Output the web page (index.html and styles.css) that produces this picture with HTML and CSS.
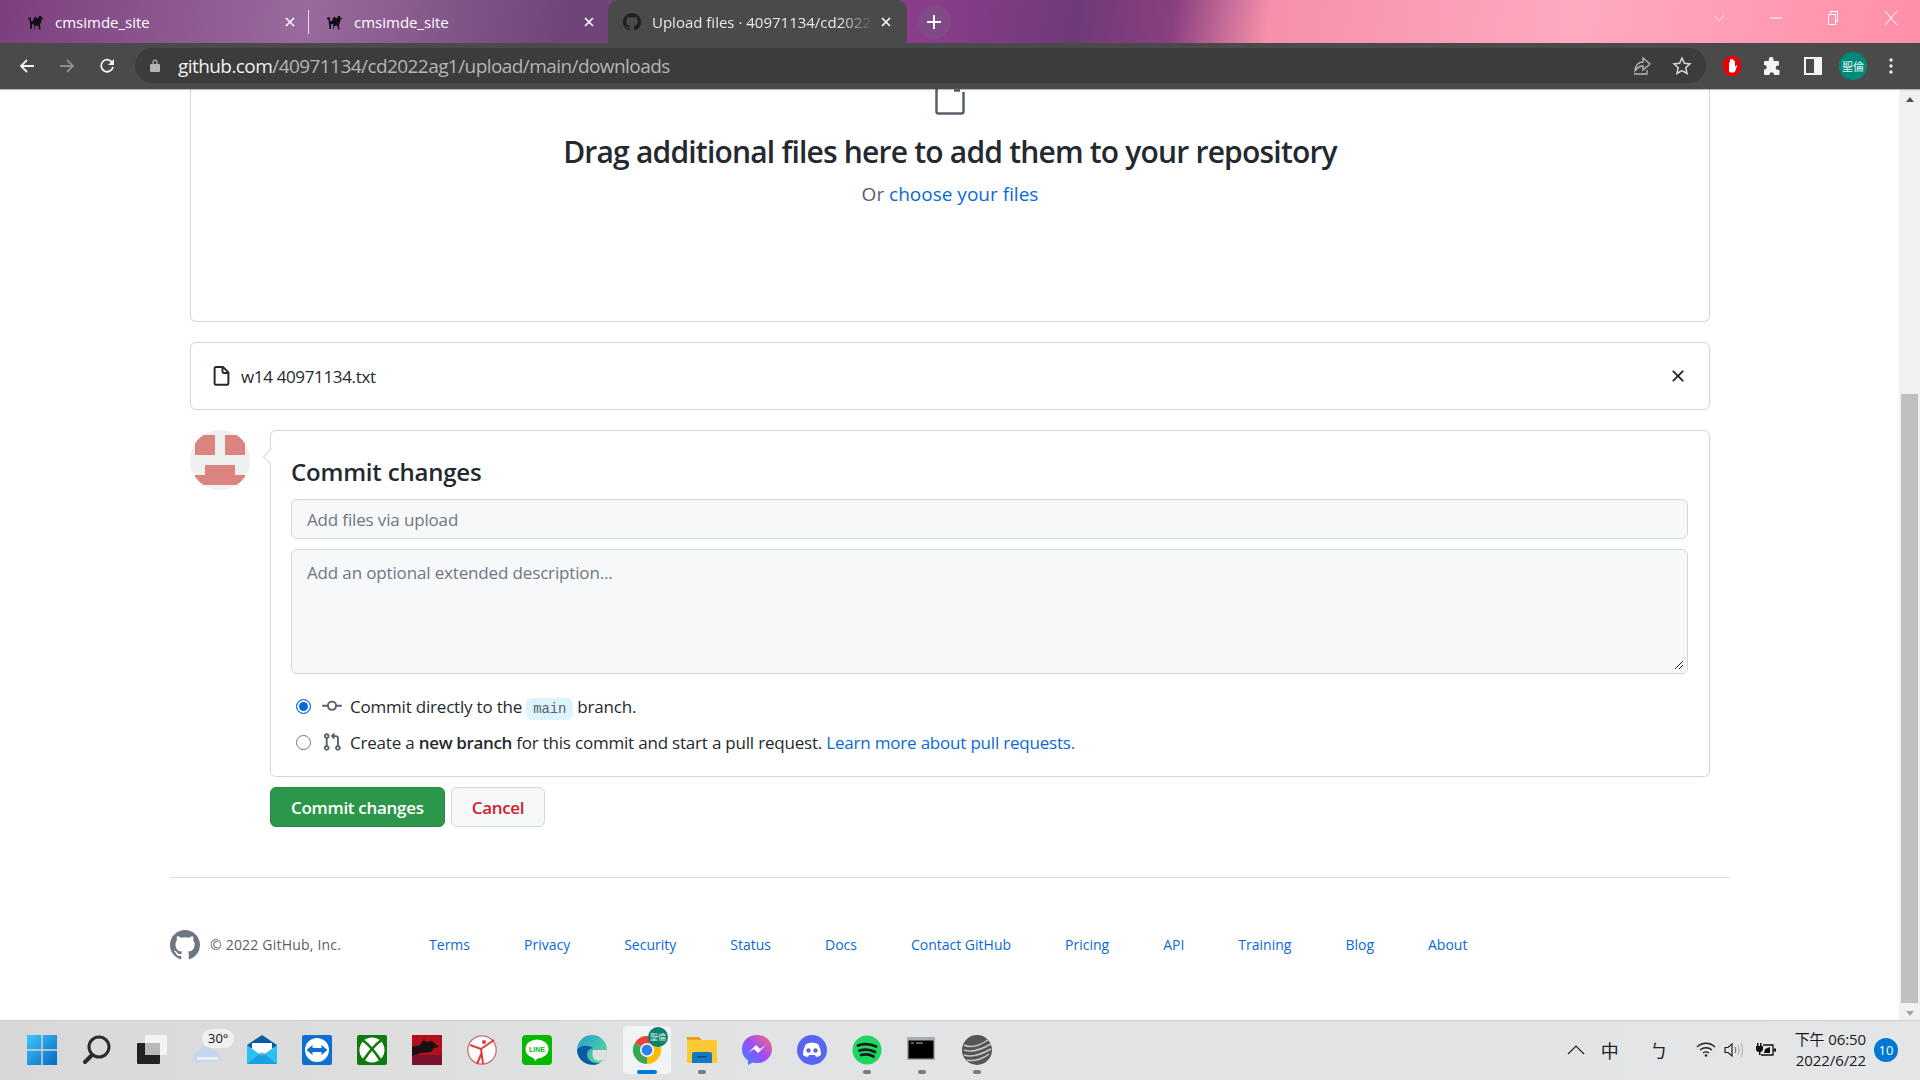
FILE: index.html
```html
<!DOCTYPE html>
<html lang="en">
  <head>
    <meta charset="UTF-8" />
    <title>Upload files · 40971134/cd2022ag1</title>
    <link rel="stylesheet" href="styles.css">
  </head>
  <body>
    <div class="window">
      <div class="tab-strip">
        <div class="tab">
          <svg class="tab-icon" viewBox="0 0 18 18"><path fill="#140c18" d="M1 5l2-1 1 1v3l2 0 1-3 1.500-1.500L10 5l1 .5 1-2.500 2 0 .5 1.500 2 1-2 1-.5 3-1 2 .5 5h-1.500l-.8-4-3 .5-.2 3.500H7.500L7 11 5 11.500 5 16H3.500L3 10.500 2.500 7 1.500 6.500z"/></svg>
          <span class="tab-title">cmsimde_site</span>
          <svg class="tab-close" viewBox="0 0 10 10"><path stroke="#fff" stroke-width="1.600" d="M1 1l8 8M9 1L1 9"/></svg>
        </div>
        <div class="tab-sep"></div>
        <div class="tab tab-second">
          <svg class="tab-icon" viewBox="0 0 18 18"><path fill="#140c18" d="M1 5l2-1 1 1v3l2 0 1-3 1.500-1.500L10 5l1 .5 1-2.500 2 0 .5 1.500 2 1-2 1-.5 3-1 2 .5 5h-1.500l-.8-4-3 .5-.2 3.500H7.500L7 11 5 11.500 5 16H3.500L3 10.500 2.500 7 1.500 6.500z"/></svg>
          <span class="tab-title">cmsimde_site</span>
          <svg class="tab-close" viewBox="0 0 10 10"><path stroke="#fff" stroke-width="1.600" d="M1 1l8 8M9 1L1 9"/></svg>
        </div>
        <div class="tab tab-active">
          <svg class="tab-icon" viewBox="0 0 16 16"><path fill="#1f1f1f" d="M8 0C3.580 0 0 3.580 0 8c0 3.540 2.290 6.530 5.470 7.590.4.070.55-.17.55-.38 0-.19-.01-.82-.01-1.490-2.010.37-2.530-.49-2.690-.94-.09-.23-.48-.94-.82-1.130-.28-.15-.68-.52-.01-.53.63-.01 1.080.58 1.230.82.72 1.210 1.870.87 2.330.66.07-.52.28-.87.51-1.070-1.780-.2-3.640-.89-3.640-3.950 0-.87.31-1.590.82-2.150-.08-.2-.36-1.020.08-2.120 0 0 .67-.21 2.200.82.64-.18 1.320-.27 2-.27.68 0 1.360.09 2 .27 1.530-1.040 2.200-.82 2.200-.82.44 1.100.16 1.920.08 2.120.51.56.82 1.270.82 2.150 0 3.070-1.870 3.750-3.650 3.950.29.25.54.73.54 1.480 0 1.070-.01 1.930-.01 2.200 0 .21.15.46.55.38A8.013 8.013 0 0016 8c0-4.420-3.580-8-8-8z"/></svg>
          <span class="tab-title tab-title-fade">Upload files · 40971134/cd2022ag1</span>
          <svg class="tab-close" viewBox="0 0 10 10"><path stroke="#fff" stroke-width="1.600" d="M1 1l8 8M9 1L1 9"/></svg>
        </div>
        <div class="new-tab">
          <svg width="14" height="14" viewBox="0 0 14 14"><path stroke="#fff" stroke-width="2" d="M7 0v14M0 7h14"/></svg>
        </div>
        <div class="window-buttons">
          <svg width="12" height="12" viewBox="0 0 12 12"><path fill="none" stroke="#ffe6ee" d="M1 3l5 6 5-6"/></svg>
          <svg width="12" height="12" viewBox="0 0 12 12"><path stroke="#fff" d="M0 6h12"/></svg>
          <svg width="12" height="14" viewBox="0 0 12 14"><path fill="none" stroke="#fff" d="M1.500 3.500h7v10h-7zM3.500 3.500v-3h7v10H8.500"/></svg>
          <svg width="14" height="14" viewBox="0 0 14 14"><path stroke="#fff" d="M1 0l12 14M13 0L1 14"/></svg>
        </div>
      </div>

      <div class="toolbar">
        <svg class="nav-icon" viewBox="0 0 16 16"><path fill="none" stroke="#f1f1f1" stroke-width="1.800" d="M15 8H2M8 2L2 8l6 6"/></svg>
        <svg class="nav-icon" viewBox="0 0 16 16"><path fill="none" stroke="#8f8f8f" stroke-width="1.800" d="M1 8h13M8 2l6 6-6 6"/></svg>
        <svg class="nav-icon" viewBox="0 0 16 16"><path fill="none" stroke="#f1f1f1" stroke-width="1.800" d="M13.500 5A6 6 0 1 0 14 9"/><path fill="#f1f1f1" d="M15 1v6H9z"/></svg>
        <div class="omnibox">
          <svg class="lock" viewBox="0 0 10 13"><path fill="#b5b5b5" d="M1 5h8a1 1 0 0 1 1 1v6a1 1 0 0 1-1 1H1a1 1 0 0 1-1-1V6a1 1 0 0 1 1-1zM2.500 5V3a2.500 2.500 0 0 1 5 0v2H6.300V3a1.300 1.300 0 0 0-2.600 0v2z"/></svg>
          <span class="url-host">github.com</span><span class="url-path">/40971134/cd2022ag1/upload/main/downloads</span>
          <div class="omnibox-actions">
            <svg width="20" height="20" viewBox="0 0 20 20"><path fill="none" stroke="#b8b8b8" stroke-width="1.300" d="M2 18h13v-4M3 15c0-6 4-9 8-9V2l7 6-7 6v-4c-4 0-6 2-8 5z"/></svg>
            <svg width="20" height="20" viewBox="0 0 20 20"><path fill="none" stroke="#d8d8d8" stroke-width="1.500" d="M10 2l2.400 5.300 5.600.6-4.200 3.800 1.200 5.700-5-2.900-5 2.900 1.200-5.700L2 7.900l5.600-.6z"/></svg>
          </div>
        </div>
        <div class="toolbar-exts">
          <svg width="20" height="22" viewBox="0 0 20 22"><path fill="#e0060b" d="M6 1h8l5 5v10l-5 5H6l-5-5V6z"/><path fill="#fff" d="M7 7.500a1 1 0 0 1 1 0V5a1 1 0 0 1 2 0v-.5a1 1 0 0 1 1.500 0V6a1 1 0 0 1 1.500.5V12l1-1.500c.5-.5 1.500 0 1 .8L13 16.500a2 2 0 0 1-1.700 1H9a2 2 0 0 1-2-2z"/></svg>
          <svg width="18" height="18" viewBox="0 0 18 18"><path fill="#f4f4f4" d="M7 0a2.300 2.300 0 0 1 2.500 2.500V4H14a1 1 0 0 1 1 1v3.500h-1a2.200 2.200 0 0 0 0 4.500h1.500v4a1 1 0 0 1-1 1H10v-1a2.300 2.300 0 0 0-4.500 0v1H1a1 1 0 0 1-1-1v-4.500h1a2.300 2.300 0 0 0 0-4.500H0V5a1 1 0 0 1 1-1h3.800V2.500A2.300 2.300 0 0 1 7 0z"/></svg>
          <svg width="18" height="18" viewBox="0 0 18 18"><path fill="#f4f4f4" fill-rule="evenodd" d="M0 0h18v18H0zM2 2v14h8V2z"/></svg>
          <div class="profile-badge">聖倫</div>
          <svg width="4" height="16" viewBox="0 0 4 16"><circle cx="2" cy="2" r="1.700" fill="#e8e8e8"/><circle cx="2" cy="8" r="1.700" fill="#e8e8e8"/><circle cx="2" cy="14" r="1.700" fill="#e8e8e8"/></svg>
        </div>
      </div>

      <div class="viewport">
        <div class="page">
          <div class="content">
            <div class="drop-box">
              <svg class="drop-icon" viewBox="0 0 30 26"><path fill="none" stroke="#57606a" stroke-width="2.500" d="M1.500 0v22.500a2 2 0 0 0 2 2h23a2 2 0 0 0 2-2V3M19 1.500h6"/></svg>
              <div class="drop-title">Drag additional files here to add them to your repository</div>
              <div class="drop-sub">Or <a class="link">choose your files</a></div>
            </div>

            <div class="file-box">
              <svg class="file-icon" viewBox="0 0 16 16"><path fill="#24292f" fill-rule="evenodd" d="M3.750 1.500a.25.25 0 00-.25.25v11.500c0 .138.112.25.25.25h8.500a.25.25 0 00.25-.25V6H9.750A1.750 1.750 0 018 4.250V1.500H3.750zm5.750.56v2.190c0 .138.112.25.25.25h2.190L9.500 2.060zM2 1.750C2 .784 2.784 0 3.750 0h5.086c.464 0 .909.184 1.237.513l3.414 3.414c.329.328.513.773.513 1.237v8.086A1.750 1.750 0 0112.250 15h-8.500A1.750 1.750 0 012 13.250V1.750z"/></svg>
              <span class="file-name">w14 40971134.txt</span>
              <svg class="file-remove" viewBox="0 0 16 16"><path fill="#24292f" d="M3.720 3.720a.75.75 0 011.060 0L8 6.940l3.220-3.220a.75.75 0 111.060 1.060L9.060 8l3.220 3.220a.75.75 0 11-1.060 1.060L8 9.060l-3.220 3.220a.75.75 0 01-1.060-1.060L6.940 8 3.720 4.780a.75.75 0 010-1.060z"/></svg>
            </div>

            <div class="commit-row">
              <svg class="avatar" viewBox="0 0 60 60">
                <defs><clipPath id="avatarClip"><circle cx="30" cy="30" r="30"/></clipPath></defs>
                <circle cx="30" cy="30" r="30" fill="#f0f0f0"/>
                <path clip-path="url(#avatarClip)" fill="#dc8480" d="M5 5h20v20H5zM35 5h20v20H35zM15 35h30v10h10v10H5V45h10z"/>
              </svg>
              <div class="commit-col">
                <div class="commit-box">
                  <h3 class="commit-title">Commit changes</h3>
                  <div class="field field-title">Add files via upload</div>
                  <div class="field field-desc">
                    Add an optional extended description...
                    <svg class="resize-grip" viewBox="0 0 10 10"><path stroke="#24292f" d="M1 9l8-8M5 9l4-4"/></svg>
                  </div>
                  <div class="radio-row first-radio">
                    <span class="radio radio-on"></span>
                    <svg class="radio-icon" viewBox="0 0 16 16"><path fill="#57606a" d="M10.500 7.750a2.500 2.500 0 11-5 0 2.500 2.500 0 015 0zm1.430.75a4.002 4.002 0 01-7.860 0H.75a.75.75 0 110-1.500h3.320a4.001 4.001 0 017.860 0h3.320a.75.75 0 110 1.500h-3.320z" fill-rule="evenodd"/></svg>
                    <span>Commit directly to the <code class="branch">main</code> branch.</span>
                  </div>
                  <div class="radio-row">
                    <span class="radio"></span>
                    <svg class="radio-icon" viewBox="0 0 16 16"><path fill="#57606a" fill-rule="evenodd" d="M7.177 3.073L9.573.677A.25.25 0 0110 .854v4.792a.25.25 0 01-.427.177L7.177 3.427a.25.25 0 010-.354zM3.750 2.500a.75.75 0 100 1.500.75.75 0 000-1.500zm-2.250.75a2.250 2.250 0 113 2.122v5.256a2.251 2.251 0 11-1.500 0V5.372A2.250 2.250 0 011.500 3.250zM11 2.500h-1V4h1a1 1 0 011 1v5.628a2.251 2.251 0 101.500 0V5A2.500 2.500 0 0011 2.500zm1 10.250a.75.75 0 111.500 0 .75.75 0 01-1.500 0zM3.750 12a.75.75 0 100 1.500.75.75 0 000-1.500z"/></svg>
                    <span>Create a <strong class="strong-branch">new branch</strong> for this commit and start a pull request. <a class="link">Learn more about pull requests.</a></span>
                  </div>
                </div>
                <div class="commit-buttons">
                  <button class="btn btn-primary" type="button">Commit changes</button>
                  <button class="btn btn-danger" type="button">Cancel</button>
                </div>
              </div>
            </div>
          </div>

          <div class="footer">
            <svg class="footer-logo" viewBox="0 0 16 16"><path fill="#6e7781" d="M8 0C3.580 0 0 3.580 0 8c0 3.540 2.290 6.530 5.470 7.590.4.070.55-.17.55-.38 0-.19-.01-.82-.01-1.490-2.010.37-2.530-.49-2.690-.94-.09-.23-.48-.94-.82-1.130-.28-.15-.68-.52-.01-.53.63-.01 1.080.58 1.230.82.72 1.210 1.870.87 2.330.66.07-.52.28-.87.51-1.070-1.780-.2-3.640-.89-3.640-3.950 0-.87.31-1.590.82-2.150-.08-.2-.36-1.020.08-2.120 0 0 .67-.21 2.200.82.64-.18 1.320-.27 2-.27.68 0 1.360.09 2 .27 1.530-1.040 2.200-.82 2.200-.82.44 1.100.16 1.920.08 2.120.51.56.82 1.270.82 2.150 0 3.070-1.870 3.750-3.650 3.950.29.25.54.73.54 1.480 0 1.070-.01 1.930-.01 2.200 0 .21.15.46.55.38A8.013 8.013 0 0016 8c0-4.420-3.580-8-8-8z"/></svg>
            <span class="copyright">© 2022 GitHub, Inc.</span>
            <nav class="footer-links">
              <a class="link">Terms</a>
              <a class="link">Privacy</a>
              <a class="link">Security</a>
              <a class="link">Status</a>
              <a class="link">Docs</a>
              <a class="link">Contact GitHub</a>
              <a class="link">Pricing</a>
              <a class="link">API</a>
              <a class="link">Training</a>
              <a class="link">Blog</a>
              <a class="link">About</a>
            </nav>
          </div>
        </div>

        <div class="scrollbar">
          <div class="scroll-arrow scroll-up"></div>
          <div class="scroll-track"><div class="scroll-thumb"></div></div>
          <div class="scroll-arrow scroll-down"></div>
        </div>
      </div>

      <div class="taskbar">
        <div class="task-icons">
          <div class="task-cell">
            <svg viewBox="0 0 30 30"><defs><linearGradient id="win" x1="0" y1="0" x2="1" y2="1"><stop offset="0" stop-color="#3ec6f8"/><stop offset="1" stop-color="#0668c6"/></linearGradient></defs><path fill="url(#win)" d="M0 0h14.300v14.300H0zM15.700 0H30v14.300H15.700zM0 15.700h14.300V30H0zM15.700 15.700H30V30H15.700z"/></svg>
          </div>
          <div class="task-cell">
            <svg viewBox="0 0 30 30"><circle cx="17" cy="12" r="10" fill="none" stroke="#2b2b2b" stroke-width="3"/><path stroke="#2b2b2b" stroke-width="4" stroke-linecap="round" d="M10 20l-7 7"/></svg>
          </div>
          <div class="task-cell">
            <svg viewBox="0 0 30 30"><rect x="8" width="22" height="20" rx="1" fill="#f3f3f3"/><rect y="8" width="23" height="21" rx="1" fill="#222"/><rect x="8" y="8" width="15" height="12" fill="#b9b9b9"/></svg>
          </div>
          <div class="task-cell weather-cell">
            <svg viewBox="0 0 30 30"><path fill="#c5d7ee" d="M6 27a5 5 0 0 1 0-10 8 8 0 0 1 15-1 6 6 0 0 1 4 11z"/><path fill="#e9eff8" d="M5 22h21v3H5z"/></svg>
            <span class="weather-temp">30°</span>
          </div>
          <div class="task-cell">
            <svg viewBox="0 0 30 30"><path fill="#0a5aa8" d="M15 0l15 10v3H0v-3z"/><path fill="#fff" d="M5 8h20v10H5z"/><path fill="#2cc0ee" d="M0 10l15 11 15-11v19H0z"/><path fill="#0f84d8" d="M0 29l15-12 15 12z" opacity=".55"/></svg>
          </div>
          <div class="task-cell">
            <svg viewBox="0 0 30 30"><rect width="30" height="30" rx="2" fill="#0e6fd2"/><circle cx="15" cy="15" r="12" fill="#fff"/><path fill="#0e6fd2" d="M4.500 15l6-5v3h9v-3l6 5-6 5v-3h-9v3z"/></svg>
          </div>
          <div class="task-cell">
            <svg viewBox="0 0 30 30"><rect width="30" height="30" rx="2" fill="#0f7b0f"/><circle cx="15" cy="15" r="12.500" fill="#fff"/><path fill="none" stroke="#0f7b0f" stroke-width="2.600" d="M5.500 5Q15 12 24 26M24.500 5Q15 12 6 26"/></svg>
          </div>
          <div class="task-cell">
            <svg viewBox="0 0 30 30"><rect width="30" height="30" fill="#b30f1d"/><path fill="#7c1230" d="M0 20h30v10H0z"/><path fill="#1a1012" d="M0 12l8-2 4-6 2 3 6-1 7 6-5 1-3 4-10 1-9 3z"/></svg>
          </div>
          <div class="task-cell">
            <svg viewBox="0 0 30 30"><circle cx="15" cy="15" r="14.200" fill="#fff" stroke="#c9686b" stroke-width="1.200"/><path fill="none" stroke="#e23b3b" stroke-width="2" d="M3 10l11 4 13-9M14 14l2 15M15 17l-5 12"/><circle cx="17" cy="7" r="2" fill="#e23b3b"/></svg>
          </div>
          <div class="task-cell">
            <svg viewBox="0 0 30 30"><rect width="30" height="30" rx="4" fill="#06b900"/><ellipse cx="15" cy="14" rx="11.500" ry="9.500" fill="#fff"/><path fill="#fff" d="M11 21h7l-5 5z"/><text x="15" y="16.500" text-anchor="middle" class="line-label">LINE</text></svg>
          </div>
          <div class="task-cell">
            <svg viewBox="0 0 30 30"><defs><linearGradient id="edge" x1="0" y1="0" x2="1" y2="1"><stop offset="0" stop-color="#1f9fd8"/><stop offset="1" stop-color="#6be08a"/></linearGradient></defs><circle cx="15" cy="15" r="15" fill="url(#edge)"/><path fill="#0c59a4" d="M0 15C1 27 13 33 24 28c-7 1-14-2-14-9 0-3 2-5 6-6C9 9 2 11 0 15z"/><path fill="#dfe0e1" d="M16 15h14c0 3-1 6-3 9-3 2-7 2-10 0-2-3-2-6-1-9z"/></svg>
          </div>
          <div class="task-cell task-active">
            <svg class="chrome-icon" viewBox="0 0 30 30"><path fill="#ea4335" d="M2 7.500A15 15 0 0 1 28 7.500L15 15z"/><path fill="#fbbc05" d="M28 7.500A15 15 0 0 1 15 30L15 15z"/><path fill="#34a853" d="M15 30A15 15 0 0 1 2 7.500L15 15z"/><circle cx="15" cy="15" r="7.500" fill="#fff"/><circle cx="15" cy="15" r="5.800" fill="#2f80ed"/></svg>
            <span class="chrome-badge">聖倫</span>
            <span class="run-dot run-dot-active"></span>
          </div>
          <div class="task-cell">
            <svg viewBox="0 0 30 30"><path fill="#e5a50a" d="M0 2h12l3 3h15v8H0z"/><path fill="#fcc934" d="M0 5h30v23H0z"/><path fill="#1578c4" d="M5 19a2 2 0 0 1 2-2h16a2 2 0 0 1 2 2v9H5z"/><path fill="#10507e" d="M10 21h10v1.500H10z"/></svg>
            <span class="run-dot"></span>
          </div>
          <div class="task-cell">
            <svg viewBox="0 0 30 30"><defs><linearGradient id="msg" x1="0" y1="1" x2="1" y2="0"><stop offset="0" stop-color="#2b8cff"/><stop offset=".5" stop-color="#9b4dfb"/><stop offset="1" stop-color="#ff6a75"/></linearGradient></defs><path fill="url(#msg)" d="M15 0c8.500 0 15 6 15 14s-6.500 14-15 14c-1.500 0-3-.2-4.300-.6L6 30v-4.500C2.300 23 0 19 0 14 0 6 6.500 0 15 0z"/><path fill="#fff" d="M6 18l8-8 4 4 6-4-8 8-4-4z"/></svg>
          </div>
          <div class="task-cell">
            <svg viewBox="0 0 30 30"><circle cx="15" cy="15" r="15" fill="#5865f2"/><path fill="#fff" d="M9 9c4-2 8-2 12 0 2 3 3 7 3 11-2 1-3 2-5 2l-1-2H12l-1 2c-2 0-3-1-5-2 0-4 1-8 3-11z"/><circle cx="11.500" cy="15.500" r="2.200" fill="#5865f2"/><circle cx="18.500" cy="15.500" r="2.200" fill="#5865f2"/></svg>
          </div>
          <div class="task-cell">
            <svg viewBox="0 0 30 30"><circle cx="15" cy="15" r="14.500" fill="#1ed760"/><path fill="none" stroke="#1a1a1a" stroke-linecap="round" stroke-width="2.800" d="M6 10.500c6-2 13-1.500 18 1M7.500 15.500c5-1.500 11-1 15.500 1.500M9 20c4-1 9-.8 12.500 1.500"/></svg>
            <span class="run-dot"></span>
          </div>
          <div class="task-cell">
            <svg viewBox="0 0 30 30"><rect y="2" width="28" height="23" fill="#a7adb4"/><rect x="1.500" y="5.500" width="25" height="18" fill="#000"/><path stroke="#bbb" d="M4 8h3M9 8h7"/></svg>
            <span class="run-dot"></span>
          </div>
          <div class="task-cell">
            <svg viewBox="0 0 30 30"><circle cx="15" cy="15" r="15" fill="#555"/><path fill="none" stroke="#c8c8c8" stroke-width="1.500" d="M2 10c8 4 18-1 24-5M2 15c8 3 20-2 27-6M2 20c9 3 20-2 27-6M5 25c8 2 17-2 22-6"/></svg>
            <span class="run-dot"></span>
          </div>
        </div>

        <div class="tray">
          <svg width="18" height="10" viewBox="0 0 18 10"><path fill="none" stroke="#222" stroke-width="1.200" d="M1 9l8-8 8 8"/></svg>
          <span class="tray-ime">中</span>
          <span class="tray-ime tray-bopo">ㄅ</span>
          <svg class="tray-wifi" width="20" height="15" viewBox="0 0 20 15"><g fill="none" stroke="#222" stroke-width="1.300"><path d="M1 5c5-5 13-5 18 0M4 8c3.500-3 8.500-3 12 0M7 11c2-1.500 4-1.500 6 0"/></g><circle cx="10" cy="13.500" r="1.300" fill="#222"/></svg>
          <svg class="tray-volume" width="20" height="16" viewBox="0 0 20 16"><path fill="none" stroke="#222" stroke-width="1.200" d="M1 5.500h3L8 2v12l-4-3.500H1z"/><path fill="none" stroke="#555" d="M11 5c1 2 1 4 0 6"/><path fill="none" stroke="#aaa" d="M14 3c1.500 3 1.500 7 0 10M17 1c2 4 2 10 0 14"/></svg>
          <svg class="tray-battery" width="20" height="16" viewBox="0 0 20 16"><path fill="#111" d="M1 1h1.500v3H1zM4 1h1.500v3H4zM0 4h7v3a3 3 0 0 1-2.500 3v3H3v-3A3 3 0 0 1 0 7z"/><path fill="none" stroke="#111" stroke-width="1.300" d="M7 3h10v10H5"/><path fill="#111" d="M9 7l5-2v6H8zM17.500 6.500H20v3h-2.500z"/></svg>
          <div class="clock">
            <div>下午 06:50</div>
            <div>2022/6/22</div>
          </div>
          <span class="notif-count">10</span>
        </div>
      </div>
    </div>
  </body>
</html>
```

FILE: styles.css
```css
html,
body {
  margin: 0;
  padding: 0;
  height: 100%;
  overflow: hidden;
  font-family: "Open Sans", "Noto Sans CJK TC", sans-serif;
  font-size: 16px;
  color: #24292f;
  background-color: #ffffff;
}

.window {
  display: flex;
  flex-direction: column;
  height: 1080px;
}

/* chrome title bar */
.tab-strip {
  display: flex;
  align-items: flex-end;
  height: 43px;
  padding-left: 8px;
  flex-shrink: 0;
  background: linear-gradient(100deg, #7c3f7e 0%, #9a6a9e 16%, #6e4478 30%, #8b3d8c 48%, #6f3a78 56%, #8a3f80 61%, #f590aa 66%, #fdaabf 82%, #ff8fa8 100%);
}

.tab {
  display: flex;
  align-items: center;
  width: 300px;
  height: 43px;
  padding: 0 13px 0 19px;
  box-sizing: border-box;
  color: #ffffff;
  font-size: 15px;
}

.tab-second {
  width: 299px;
  padding: 0 14px 0 17px;
}

.tab-active {
  width: 299px;
  padding: 0 16px 0 15px;
  background-color: #4a4a4a;
  border-radius: 10px 10px 0 0;
  color: #e8e8e8;
}

.tab-sep {
  width: 1px;
  height: 24px;
  margin-bottom: 9px;
  background-color: #e6dbe8;
}

.tab-icon {
  width: 18px;
  height: 18px;
  margin-right: 10px;
  flex-shrink: 0;
}

.tab-active .tab-icon {
  margin-right: 11px;
}

.tab-title {
  flex-grow: 1;
  white-space: nowrap;
  overflow: hidden;
}

.tab-title-fade {
  -webkit-mask-image: linear-gradient(90deg, #000 85%, transparent 100%);
  mask-image: linear-gradient(90deg, #000 85%, transparent 100%);
}

.tab-close {
  width: 10px;
  height: 10px;
  margin-left: 8px;
  flex-shrink: 0;
}

.new-tab {
  display: flex;
  align-items: center;
  justify-content: center;
  width: 34px;
  height: 34px;
  margin: 0 0 4px 10px;
  border-radius: 50%;
  background-color: #7f4a86;
}

.window-buttons {
  display: flex;
  align-items: center;
  gap: 45px;
  margin: 0 22px 18px auto;
}

/* chrome toolbar */
.toolbar {
  display: flex;
  align-items: center;
  height: 46px;
  padding: 0 0 1px 19px;
  box-sizing: border-box;
  flex-shrink: 0;
  background-color: #4a4a4a;
  box-shadow: 0 1px 1px rgba(0, 0, 0, 0.25);
  position: relative;
}

.nav-icon {
  width: 16px;
  height: 16px;
  margin-right: 24px;
}

.omnibox {
  display: flex;
  align-items: center;
  width: 1571px;
  height: 35px;
  margin-left: -4px;
  padding-left: 15px;
  box-sizing: border-box;
  background-color: #3c3c3c;
  border-radius: 18px;
  font-size: 19px;
  letter-spacing: -0.57px;
}

.lock {
  width: 10px;
  height: 13px;
  margin-right: 18px;
}

.url-host {
  color: #f1f1f1;
}

.url-path {
  color: #b4b4b4;
}

.omnibox-actions {
  display: flex;
  align-items: center;
  gap: 20px;
  margin: 0 14px 0 auto;
}

.toolbar-exts {
  display: flex;
  align-items: center;
  gap: 22px;
  margin-left: 16px;
}

.profile-badge {
  display: flex;
  align-items: center;
  justify-content: center;
  width: 28px;
  height: 28px;
  margin-left: -5px;
  border-radius: 50%;
  background-color: #00897b;
  color: #e6f5f3;
  font-size: 11px;
}

/* page */
.viewport {
  display: flex;
  flex-grow: 1;
  min-height: 0;
}

.page {
  flex-grow: 1;
  min-width: 0;
  overflow: hidden;
  background-color: #ffffff;
}

.content {
  width: 1520px;
  margin-left: 190px;
}

.link {
  color: #0969da;
}

.drop-box {
  display: flex;
  flex-direction: column;
  align-items: center;
  height: 233px;
  box-sizing: border-box;
  border: 1px solid #d0d7de;
  border-top: none;
  border-radius: 0 0 6px 6px;
}

.drop-icon {
  width: 30px;
  height: 26px;
}

.drop-title {
  margin-top: 19px;
  font-size: 30px;
  font-weight: 600;
  line-height: 36px;
  letter-spacing: -0.8px;
  white-space: nowrap;
}

.drop-sub {
  margin-top: 10px;
  font-size: 19px;
  line-height: 28px;
  color: #57606a;
}

.file-box {
  display: flex;
  align-items: center;
  height: 68px;
  margin-top: 20px;
  padding: 0 24px 0 20px;
  box-sizing: border-box;
  border: 1px solid #d0d7de;
  border-radius: 6px;
}

.file-icon {
  width: 21px;
  height: 21px;
  margin-right: 9px;
}

.file-name {
  font-size: 17px;
  letter-spacing: -0.35px;
}

.file-remove {
  width: 20px;
  height: 20px;
  margin-left: auto;
  margin-right: -3px;
}

.commit-row {
  display: flex;
  margin-top: 20px;
}

.avatar {
  width: 60px;
  height: 60px;
  flex-shrink: 0;
  margin-right: 20px;
}

.commit-col {
  flex-grow: 1;
}

.commit-box {
  height: 347px;
  padding: 23px 21px 20px 20px;
  box-sizing: border-box;
  border: 1px solid #d0d7de;
  border-radius: 6px;
  position: relative;
}

/* little arrow toward the avatar */
.commit-box::before {
  content: "";
  position: absolute;
  left: -6px;
  top: 20px;
  width: 10px;
  height: 10px;
  background-color: #ffffff;
  border-left: 1px solid #d0d7de;
  border-bottom: 1px solid #d0d7de;
  transform: rotate(45deg);
}

.commit-title {
  margin: 0 0 9px;
  font-size: 24px;
  font-weight: 600;
  line-height: 36px;
  letter-spacing: -0.2px;
}

.field {
  padding: 0 15px;
  background-color: #f6f8fa;
  border: 1px solid #d0d7de;
  border-radius: 6px;
  box-sizing: border-box;
  color: #6e7781;
  font-size: 17px;
  letter-spacing: -0.15px;
}

.field-title {
  height: 40px;
  line-height: 40px;
}

.field-desc {
  height: 125px;
  margin-top: 10px;
  padding-top: 11px;
  line-height: 24px;
  position: relative;
}

.resize-grip {
  position: absolute;
  right: 3px;
  bottom: 3px;
  width: 10px;
  height: 10px;
}

.radio-row {
  display: flex;
  align-items: center;
  height: 36px;
  font-size: 17px;
  letter-spacing: -0.2px;
  white-space: nowrap;
}

.first-radio {
  margin-top: 14px;
}

.radio {
  width: 15px;
  height: 15px;
  margin: 0 11px 0 5px;
  flex-shrink: 0;
  box-sizing: border-box;
  border: 1px solid #6e7781;
  border-radius: 50%;
  background-color: #ffffff;
}

.radio-on {
  border-color: #0969da;
  background-color: #0969da;
  box-shadow: inset 0 0 0 2px #ffffff;
}

.radio-icon {
  width: 20px;
  height: 20px;
  margin-right: 8px;
  flex-shrink: 0;
}

.strong-branch {
  font-weight: 600;
  letter-spacing: -0.35px;
}

.branch {
  padding: 3px 7px;
  background-color: #ddf4ff;
  border-radius: 6px;
  color: #57606a;
  font-family: "Liberation Mono", monospace;
  font-size: 14px;
  letter-spacing: -0.2px;
}

.commit-buttons {
  display: flex;
  gap: 6px;
  margin-top: 10px;
}

.btn {
  height: 40px;
  padding: 0 20px;
  border-radius: 6px;
  font-family: inherit;
  font-size: 17px;
  font-weight: 600;
  letter-spacing: -0.3px;
}

.btn-primary {
  background-color: #2c974b;
  border: 1px solid #278642;
  color: #ffffff;
}

.btn-danger {
  background-color: #f6f8fa;
  border: 1px solid #d0d7de;
  color: #cf222e;
}

.footer {
  display: flex;
  align-items: center;
  width: 1560px;
  height: 134px;
  margin: 50px 0 0 170px;
  border-top: 1px solid #d8dee4;
  box-sizing: border-box;
  font-size: 14px;
}

.footer-logo {
  width: 30px;
  height: 30px;
  margin-right: 10px;
}

.copyright {
  color: #57606a;
  letter-spacing: 0.2px;
}

.footer-links {
  display: flex;
  gap: 54px;
  margin-left: 88px;
}

.scrollbar {
  display: flex;
  flex-direction: column;
  width: 21px;
  flex-shrink: 0;
  background-color: #f1f1f1;
}

.scroll-arrow {
  height: 17px;
  position: relative;
}

.scroll-arrow::after {
  content: "";
  position: absolute;
  left: 7px;
  top: 8px;
  border-left: 4px solid transparent;
  border-right: 4px solid transparent;
}

.scroll-up::after {
  border-bottom: 5px solid #505050;
}

.scroll-down::after {
  border-top: 5px solid #a3a3a3;
}

.scroll-track {
  flex-grow: 1;
  display: flex;
  flex-direction: column;
  justify-content: flex-end;
  align-items: center;
}

.scroll-thumb {
  width: 17px;
  height: 609px;
  background-color: #c0c0c0;
}

/* windows taskbar */
.taskbar {
  display: flex;
  align-items: center;
  height: 60px;
  flex-shrink: 0;
  padding: 0 0 2px 14px;
  box-sizing: border-box;
  background: linear-gradient(90deg, #d8d8d8 0%, #e2e3e4 40%, #e4e5e6 100%);
  border-top: 1px solid #cfcfcf;
}

.task-icons {
  display: flex;
}

.task-cell {
  display: flex;
  align-items: center;
  justify-content: center;
  width: 55px;
  height: 48px;
  position: relative;
}

.task-cell svg {
  width: 30px;
  height: 30px;
  position: relative;
}

.task-cell .chrome-icon {
  width: 28px;
  height: 28px;
}

/* highlight behind the focused app */
.task-active::before {
  content: "";
  position: absolute;
  left: 4px;
  top: 0;
  width: 48px;
  height: 48px;
  background-color: #f2f3f4;
  border-radius: 4px;
}

.weather-temp {
  position: absolute;
  top: 3px;
  left: 23px;
  padding: 0 6px;
  background-color: #f0f0f0;
  border-radius: 10px;
  font-size: 13px;
  line-height: 19px;
  color: #111111;
}

.chrome-badge {
  position: absolute;
  top: 1px;
  left: 29px;
  width: 20px;
  height: 20px;
  border-radius: 50%;
  background-color: #0d8170;
  color: #d8ece8;
  font-size: 8px;
  line-height: 20px;
  text-align: center;
}

.run-dot {
  position: absolute;
  left: 24px;
  bottom: 0;
  width: 8px;
  height: 4px;
  border-radius: 2px;
  background-color: #7a7a7a;
}

.run-dot-active {
  left: 18px;
  width: 20px;
  background-color: #0078d4;
}

.line-label {
  font-family: "Liberation Sans", sans-serif;
  font-size: 7px;
  font-weight: 700;
  fill: #06b900;
}

.tray {
  display: flex;
  align-items: center;
  margin-left: auto;
  padding-right: 22px;
}

.tray-ime {
  width: 24px;
  margin-left: 13px;
  font-size: 18px;
  text-align: center;
  color: #222222;
}

.tray-bopo {
  margin-left: 25px;
}

.tray-wifi {
  margin-left: 25px;
}

.tray-volume {
  margin-left: 8px;
}

.tray-battery {
  margin-left: 12px;
}

.clock {
  margin-left: 19px;
  font-size: 15px;
  line-height: 21px;
  letter-spacing: -0.1px;
  text-align: right;
  color: #1a1a1a;
}

.notif-count {
  display: flex;
  align-items: center;
  justify-content: center;
  width: 24px;
  height: 24px;
  margin-left: 8px;
  border-radius: 50%;
  background-color: #0078d4;
  color: #ffffff;
  font-size: 13px;
}
```
